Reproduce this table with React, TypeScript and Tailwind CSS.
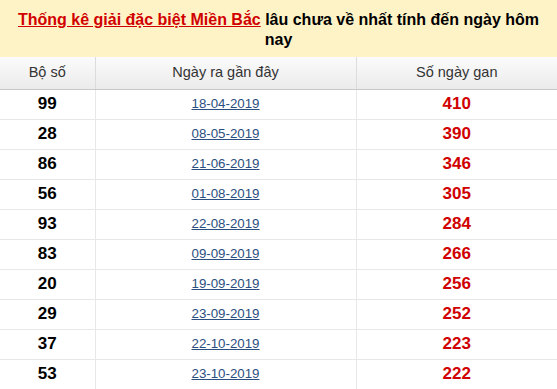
const rows: [string, string, number][] = [
  ['99', '18-04-2019', 410],
  ['28', '08-05-2019', 390],
  ['86', '21-06-2019', 346],
  ['56', '01-08-2019', 305],
  ['93', '22-08-2019', 284],
  ['83', '09-09-2019', 266],
  ['20', '19-09-2019', 256],
  ['29', '23-09-2019', 252],
  ['37', '22-10-2019', 223],
  ['53', '23-10-2019', 222],
];

export default function App() {
  return (
    <div className="w-[557px] bg-white font-['Liberation_Sans',Arial,sans-serif]">
      <div className="bg-[#fef3c7] px-4 pt-[10px] pb-[7px] text-center text-[16px] leading-[20px] font-bold text-black">
        <a href="#" className="text-[#d10000] underline">
          Thống kê giải đặc biệt Miền Bắc
        </a>{' '}
        lâu chưa về nhất tính đến ngày hôm nay
      </div>

      <table className="w-full table-fixed border-collapse">
        <colgroup>
          <col className="w-[95px]" />
          <col className="w-[261px]" />
          <col />
        </colgroup>
        <thead>
          <tr className="h-[32px] bg-gradient-to-b from-[#fbfbfd] to-[#ebebeb] text-[14.5px] font-normal text-[#333]">
            <th className="border-r border-b border-r-[#dcdcdc] border-b-[#c8c8c8] font-normal">Bộ số</th>
            <th className="border-r border-b border-r-[#dcdcdc] border-b-[#c8c8c8] font-normal">Ngày ra gần đây</th>
            <th className="border-b border-b-[#c8c8c8] font-normal">Số ngày gan</th>
          </tr>
        </thead>
        <tbody>
          {rows.map(([num, date, days]) => (
            <tr key={num} className="h-[30px]">
              <td className="border-r border-b border-[#e8e8e8] text-center text-[17px] font-bold text-black">{num}</td>
              <td className="border-r border-b border-[#e8e8e8] text-center text-[13.3px]">
                <a href="#" className="text-[#2b4f80] underline">
                  {date}
                </a>
              </td>
              <td className="border-b border-[#e8e8e8] text-center text-[17px] font-bold text-[#d10000]">{days}</td>
            </tr>
          ))}
        </tbody>
      </table>
    </div>
  );
}
